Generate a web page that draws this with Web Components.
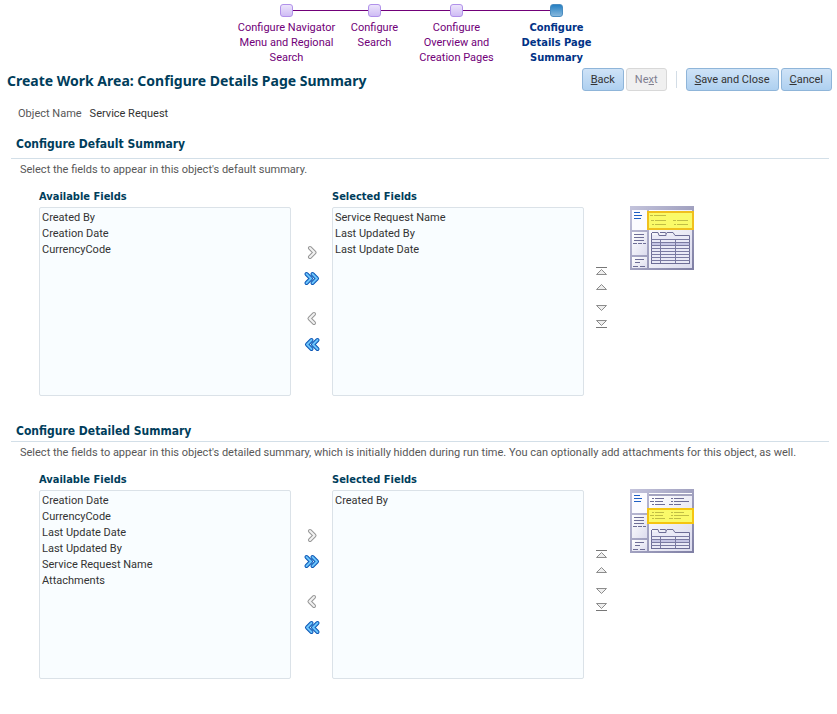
<!DOCTYPE html>
<html lang="en">
<head>
<meta charset="utf-8">
<title>Create Work Area: Configure Details Page Summary</title>
<style>
    body {
        margin: 0;
        font-family: Roboto, "Liberation Sans", sans-serif;
        font-size: 11px;
        line-height: 15px;
        color: #333333;
        background-color: white;
        --bold-font: "DejaVu Sans Condensed", "DejaVu Sans", sans-serif;
        --title-font: "Noto Sans", "Open Sans", sans-serif;
    }
</style>
</head>
<body>
<work-area-page>
    <train-bar slot="train">
        <train-stop>Configure Navigator<br>Menu and Regional<br>Search</train-stop>
        <train-stop>Configure<br>Search</train-stop>
        <train-stop>Configure<br>Overview and<br>Creation Pages</train-stop>
        <train-stop current>Configure<br>Details Page<br>Summary</train-stop>
    </train-bar>
    <page-header slot="header">
        Create Work Area: Configure Details Page Summary
        <action-button slot="actions" key="B">Back</action-button>
        <action-button slot="actions" key="x" disabled>Next</action-button>
        <action-divider slot="actions"></action-divider>
        <action-button slot="actions" key="S">Save and Close</action-button>
        <action-button slot="actions" key="C">Cancel</action-button>
    </page-header>
    <label-value label="Object Name">Service Request</label-value>
    <summary-section class="default" heading="Configure Default Summary">
        <span slot="hint">Select the fields to appear in this object's default summary.</span>
        <field-shuttle
            available="Created By|Creation Date|CurrencyCode"
            selected="Service Request Name|Last Updated By|Last Update Date"></field-shuttle>
        <layout-preview></layout-preview>
    </summary-section>
    <summary-section heading="Configure Detailed Summary">
        <span slot="hint">Select the fields to appear in this object's detailed summary, which is initially hidden during run time. You can optionally add attachments for this object, as well.</span>
        <field-shuttle
            available="Creation Date|CurrencyCode|Last Update Date|Last Updated By|Service Request Name|Attachments"
            selected="Created By"></field-shuttle>
        <layout-preview detailed></layout-preview>
    </summary-section>
</work-area-page>

<script>
class WorkAreaPage extends HTMLElement {
    constructor() {
        super();
        this.shadowDOM = this.attachShadow({ mode: "open" });
        this.shadowDOM.innerHTML = `
            <style>
                :host {
                    display: block;
                    padding: 4px 5px 8px 7px;
                }

                main {
                    padding: 0 3px 0 4px;
                }

                ::slotted(summary-section) {
                    margin-bottom: 26px;
                }

                ::slotted(summary-section.default) {
                    --heading-height: 24px;
                }
            </style>
            <slot name="train"></slot>
            <slot name="header"></slot>
            <main><slot></slot></main>`;
    }
}

class TrainBar extends HTMLElement {
    constructor() {
        super();
        this.shadowDOM = this.attachShadow({ mode: "open" });
        this.shadowDOM.innerHTML = `
            <style>
                :host {
                    display: block;
                }

                nav {
                    display: grid;
                    grid-template-columns: 110px 66px 98px 102px;
                    justify-content: center;
                }

                ::slotted(train-stop:first-child) {
                    --line-before: transparent;
                }

                ::slotted(train-stop:last-child) {
                    --line-after: transparent;
                }
            </style>
            <nav aria-label="Progress"><slot></slot></nav>`;
    }
}

class TrainStop extends HTMLElement {
    constructor() {
        super();
        this.shadowDOM = this.attachShadow({ mode: "open" });
        this.shadowDOM.innerHTML = `
            <style>
                :host {
                    display: block;
                    text-align: center;
                    color: #710079;
                }

                :host([current]) {
                    color: #003286;
                    font-family: var(--bold-font);
                    font-weight: bold;
                }

                .track {
                    display: flex;
                    align-items: center;
                    margin-bottom: 3px;
                }

                .track::before,
                .track::after {
                    content: "";
                    flex: 1;
                    height: 1px;
                    background-color: var(--line-before, #710079);
                }

                .track::after {
                    background-color: var(--line-after, #710079);
                }

                .stop {
                    box-sizing: border-box;
                    width: 13px;
                    height: 13px;
                    border: 1px solid #b191ea;
                    border-radius: 3px;
                    background: linear-gradient(#ece4fb, #cfbcf5);
                }

                :host([current]) .stop {
                    border-color: #4a8cc0;
                    background: linear-gradient(#2580c3, #86b7dc);
                }

                a {
                    color: inherit;
                    text-decoration: none;
                }
            </style>
            <div class="track"><span class="stop"></span></div>
            <a href="#"><slot></slot></a>`;
    }
}

class PageHeader extends HTMLElement {
    constructor() {
        super();
        this.shadowDOM = this.attachShadow({ mode: "open" });
        this.shadowDOM.innerHTML = `
            <style>
                :host {
                    display: flex;
                    justify-content: space-between;
                    align-items: flex-start;
                    margin-top: 3px;
                }

                h1 {
                    margin: 0;
                    font-family: var(--title-font);
                    font-size: 14px;
                    line-height: 26px;
                    color: #003d5b;
                }

                .actions {
                    display: flex;
                    align-items: center;
                    gap: 2px;
                }
            </style>
            <h1><slot></slot></h1>
            <div class="actions"><slot name="actions"></slot></div>`;
    }
}

class ActionButton extends HTMLElement {
    constructor() {
        super();
        this.shadowDOM = this.attachShadow({ mode: "open" });
    }

    connectedCallback() {
        const key = this.getAttribute("key");
        const text = this.textContent.replace(key, `<u>${key}</u>`);
        this.shadowDOM.innerHTML = `
            <style>
                :host {
                    display: block;
                }

                button {
                    display: block;
                    box-sizing: border-box;
                    height: 23px;
                    padding: 0 8px;
                    border: 1px solid #8fb5d9;
                    border-radius: 3px;
                    background: linear-gradient(#cfe3f7, #aed0f0);
                    color: #333333;
                    font: inherit;
                    white-space: nowrap;
                }

                button:disabled {
                    border-color: #d8d8d8;
                    background: #f0f0f0;
                    color: #808090;
                }
            </style>
            <button type="button" accesskey="${key}"${this.hasAttribute("disabled") ? " disabled" : ""}>${text}</button>`;
    }
}

class ActionDivider extends HTMLElement {
    constructor() {
        super();
        this.shadowDOM = this.attachShadow({ mode: "open" });
        this.shadowDOM.innerHTML = `
            <style>
                :host {
                    display: block;
                    width: 1px;
                    height: 17px;
                    margin: 0 7px;
                    background-color: #d3dde6;
                }
            </style>`;
    }
}

class LabelValue extends HTMLElement {
    constructor() {
        super();
        this.shadowDOM = this.attachShadow({ mode: "open" });
    }

    connectedCallback() {
        this.shadowDOM.innerHTML = `
            <style>
                :host {
                    display: block;
                }

                dl {
                    display: flex;
                    gap: 8px;
                    margin: 12px 0 14px;
                    padding-left: 7px;
                }

                dt {
                    color: #575757;
                }

                dd {
                    margin: 0;
                }
            </style>
            <dl>
                <dt>${this.getAttribute("label")}</dt>
                <dd><slot></slot></dd>
            </dl>`;
    }
}

class SummarySection extends HTMLElement {
    constructor() {
        super();
        this.shadowDOM = this.attachShadow({ mode: "open" });
    }

    connectedCallback() {
        this.shadowDOM.innerHTML = `
            <style>
                :host {
                    display: block;
                }

                h2 {
                    box-sizing: border-box;
                    height: var(--heading-height, 20px);
                    margin: 0;
                    padding-left: 5px;
                    border-bottom: 1px solid #d3dfe8;
                    font-family: var(--bold-font);
                    font-size: 12px;
                    line-height: 18px;
                    color: #003d5b;
                }

                p {
                    margin: 3px 0 12px;
                    padding-left: 9px;
                    color: #575757;
                }

                .body {
                    display: flex;
                    align-items: flex-start;
                    gap: 22px;
                    padding-left: 28px;
                }

                ::slotted(layout-preview) {
                    margin-top: 17px;
                }
            </style>
            <section>
                <h2>${this.getAttribute("heading")}</h2>
                <p><slot name="hint"></slot></p>
                <div class="body"><slot></slot></div>
            </section>`;
    }
}

// Chevrons are stroked twice: a dark outline, then a lighter core.
const chevron = (path, edge, core) => `
    <svg width="18" height="16" viewBox="0 0 18 16" fill="none" stroke-linejoin="round" stroke-linecap="round">
        ${path.map(d => `<path d="${d}" stroke="${edge}" stroke-width="4"/><path d="${d}" stroke="${core}" stroke-width="2"/>`).join("")}
    </svg>`;

const triangle = (path, bar) => `
    <svg width="13" height="10" viewBox="0 0 13 10">
        <path d="${path}" fill="#eeeeee" stroke="#8c8c8c"/>
        ${bar === undefined ? "" : `<path d="M1 ${bar}h11" stroke="#777777"/>`}
    </svg>`;

const ICONS = {
    move: chevron(["M7 4 11.5 8.5 7 13"], "#969696", "#f2f2f2"),
    moveAll: chevron(["M3.5 4 8 8.5 3.5 13", "M9.5 4 14 8.5 9.5 13"], "#0a55b5", "#6cc4fb"),
    remove: chevron(["M11 4 6.5 8.5 11 13"], "#969696", "#f2f2f2"),
    removeAll: chevron(["M14.5 4 10 8.5 14.5 13", "M8.5 4 4 8.5 8.5 13"], "#0a55b5", "#6cc4fb"),
    top: triangle("M1.5 8.5 6.5 3.5 11.5 8.5z", 1.5),
    up: triangle("M1.5 7.5 6.5 2.5 11.5 7.5z"),
    down: triangle("M1.5 2.5 6.5 7.5 11.5 2.5z"),
    bottom: triangle("M1.5 1.5 6.5 6.5 11.5 1.5z", 8.5)
};

class FieldShuttle extends HTMLElement {
    constructor() {
        super();
        this.shadowDOM = this.attachShadow({ mode: "open" });
    }

    connectedCallback() {
        this.render();
    }

    options(name) {
        return this.getAttribute(name).split("|").map(item => `<option>${item}</option>`).join("");
    }

    button(icon, title, group) {
        return `<button type="button" class="${group || ""}" aria-label="${title}">${ICONS[icon]}</button>`;
    }

    render() {
        this.shadowDOM.innerHTML = `
            <style>
                :host {
                    display: grid;
                    flex: 0 1 569px;
                    grid-template-columns: 1fr 41px 1fr 24px;
                    grid-template-rows: 18px auto;
                    min-width: 0;
                }

                label {
                    font-family: var(--bold-font);
                    font-weight: bold;
                    color: #003d5b;
                }

                .selected {
                    grid-column: 3;
                }

                select {
                    box-sizing: border-box;
                    grid-row: 2;
                    width: 100%;
                    height: 189px;
                    padding: 3px 0 0;
                    border: 1px solid #dbe2e8;
                    border-radius: 2px;
                    background-color: #f9fdff;
                    color: #333333;
                    font: inherit;
                    overflow: auto;
                    outline: none;
                }

                option {
                    min-height: 16px;
                    padding: 0 2px;
                    line-height: 16px;
                }

                .buttons {
                    display: flex;
                    flex-direction: column;
                    grid-row: 2;
                    align-items: center;
                    justify-content: center;
                    gap: 10px;
                    padding-bottom: 8px;
                }

                .order {
                    gap: 6px;
                    padding-left: 11px;
                }

                button {
                    display: block;
                    padding: 0;
                    border: 0;
                    background: none;
                }

                button.break {
                    margin-top: 14px;
                }

                .order button.break {
                    margin-top: 5px;
                }

                svg {
                    display: block;
                }
            </style>
            <label for="available">Available Fields</label>
            <label class="selected" for="selected">Selected Fields</label>
            <select id="available" multiple>${this.options("available")}</select>
            <div class="buttons">
                ${this.button("move", "Move selected items")}
                ${this.button("moveAll", "Move all items")}
                ${this.button("remove", "Remove selected items", "break")}
                ${this.button("removeAll", "Remove all items")}
            </div>
            <select id="selected" multiple>${this.options("selected")}</select>
            <div class="buttons order">
                ${this.button("top", "Move to top")}
                ${this.button("up", "Move up")}
                ${this.button("down", "Move down", "break")}
                ${this.button("bottom", "Move to bottom")}
            </div>`;
    }
}

class LayoutPreview extends HTMLElement {
    constructor() {
        super();
        this.shadowDOM = this.attachShadow({ mode: "open" });
    }

    connectedCallback() {
        this.render();
    }

    // Text dashes, each given as [x, y, length].
    dashes(list, color) {
        const d = list.map(([x, y, w]) => `M${x} ${y}.5h${w}`).join("");
        return `<path d="${d}" stroke="${color}"/>`;
    }

    table(top, rows) {
        const body = top + 7;
        const bottom = body + rows * 3;
        let lines = "";
        for (let y = body; y < bottom; y += 3) {
            lines += `M21 ${y}.5h39`;
        }
        return `
            <rect x="21" y="${top + 3}" width="39" height="${bottom - top - 3}" fill="#e9e9f6"/>
            <rect x="21" y="${body + 3}" width="39" height="3" fill="#c5c5e4"/>
            <path d="M21.5 ${bottom}V${top + 1}M22 ${top}.5h6l1 3h7V${top + 1}M30 ${top}.5h5l2 1M37 ${top}.5h6l2 3h14.5V${bottom}M21 ${bottom}.5h39" fill="none" stroke="#6d6d96"/>
            <path d="${lines}M30.5 ${body}V${bottom}M45.5 ${body}V${bottom}" stroke="#7a7aa2"/>`;
    }

    render() {
        const detailed = this.hasAttribute("detailed");
        const blocks = [[22, 0, 2], [25, 0, 9], [41, 0, 2], [44, 0, 10],
            [20, 3, 4], [25, 3, 8], [41, 3, 2], [44, 3, 15],
            [22, 6, 2], [25, 6, 10], [39, 6, 4], [44, 6, 7]];
        const shift = dy => blocks.map(([x, y, w]) => [x, y + dy, w]);

        const content = detailed ? `
            <path d="M19 4.5h43" stroke="#ffffff"/>
            <path d="M19 6h43" stroke="#a4a4c0" stroke-width="2"/>
            ${this.dashes(shift(9), "#6d6d96")}
            <rect x="18" y="20" width="45" height="14" fill="#fafa69" stroke="#f5c511" stroke-width="2"/>
            ${this.dashes(shift(23), "#c0bd45")}
            ${this.table(40, 4)}` : `
            <rect x="18" y="6" width="45" height="17" fill="#fafa69" stroke="#f0c01e" stroke-width="2"/>
            ${this.dashes([[20, 9, 3], [24, 9, 12], [21, 14, 3], [25, 14, 11], [43, 14, 3], [47, 14, 11],
                [22, 18, 2], [25, 18, 11], [44, 18, 2], [47, 18, 11]], "#c0bd45")}
            ${this.table(26, 8)}`;

        this.shadowDOM.innerHTML = `
            <style>
                :host {
                    display: block;
                    flex: none;
                }

                svg {
                    display: block;
                }
            </style>
            <svg width="64" height="64" viewBox="0 0 64 64" role="img" aria-label="Summary location on the page">
                <defs>
                    <linearGradient id="frame" x1="0" y1="0" x2="1" y2="1">
                        <stop offset="0" stop-color="#c4c4dc"/>
                        <stop offset="1" stop-color="#7f7fa4"/>
                    </linearGradient>
                    <linearGradient id="pane" x1="0" y1="0" x2="1" y2="1">
                        <stop offset="0" stop-color="#ffffff"/>
                        <stop offset="1" stop-color="#dcdcee"/>
                    </linearGradient>
                </defs>
                <rect width="64" height="64" fill="url(#frame)"/>
                <rect x="2" y="4" width="15" height="20" fill="#fbfbff"/>
                <rect x="2" y="26" width="15" height="23" fill="url(#pane)"/>
                <rect x="2" y="51" width="15" height="11" fill="url(#pane)"/>
                <rect x="19" y="4" width="43" height="58" fill="url(#pane)"/>
                ${this.dashes([[4, 6, 6], [4, 9, 8], [4, 12, 7]], "#1e5fc4")}
                ${this.dashes([[4, 28, 10], [4, 31, 10], [4, 34, 10], [3, 37, 4], [8, 37, 4], [13, 37, 3],
                    [5, 53, 9], [5, 56, 5], [3, 60, 5], [10, 60, 5]], "#6d6d96")}
                ${content}
            </svg>`;
    }
}

customElements.define("work-area-page", WorkAreaPage);
customElements.define("train-bar", TrainBar);
customElements.define("train-stop", TrainStop);
customElements.define("page-header", PageHeader);
customElements.define("action-button", ActionButton);
customElements.define("action-divider", ActionDivider);
customElements.define("label-value", LabelValue);
customElements.define("summary-section", SummarySection);
customElements.define("field-shuttle", FieldShuttle);
customElements.define("layout-preview", LayoutPreview);
</script>
</body>
</html>
